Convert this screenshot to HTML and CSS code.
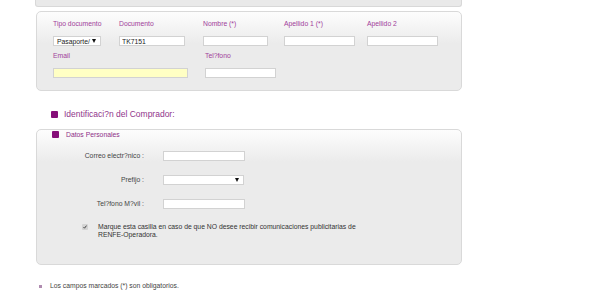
FILE: index.html
```html
<!DOCTYPE html>
<html lang="es">
<head>
    <meta charset="UTF-8">
    <title>Datos del viajero</title>
    <link rel="stylesheet" href="styles.css">
</head>
<body>
<div class="wrap">

    <div class="panel-end"></div>

    <div class="panel passenger">
        <div class="row">
            <div class="field f-tipo">
                <label>Tipo documento</label>
                <div class="select sel-tipo"><span>Pasaporte/</span><span class="arrow"></span></div>
            </div>
            <div class="field f-doc">
                <label>Documento</label>
                <input class="in-doc" value="TK7151">
            </div>
            <div class="field f-nom">
                <label>Nombre (*)</label>
                <input class="in-nom">
            </div>
            <div class="field f-ap1">
                <label>Apellido 1 (*)</label>
                <input class="in-ap">
            </div>
            <div class="field">
                <label>Apellido 2</label>
                <input class="in-ap">
            </div>
        </div>
        <div class="row row2">
            <div class="field f-email">
                <label>Email</label>
                <input class="in-email">
            </div>
            <div class="field">
                <label>Tel?fono</label>
                <input class="in-ap">
            </div>
        </div>
    </div>

    <h3 class="title"><span class="sq"></span>Identificaci?n del Comprador:</h3>

    <div class="panel buyer">
        <div class="legend"><span class="sq"></span>Datos Personales</div>
        <div class="form">
            <label>Correo electr?nico :</label>
            <input class="in-buyer">
            <label>Prefijo :</label>
            <div class="select sel-pref"><span></span><span class="arrow"></span></div>
            <label>Tel?fono M?vil :</label>
            <input class="in-buyer">
        </div>
        <div class="optout">
            <span class="check"><svg width="4" height="4" viewBox="0 0 4 4"><path d="M0.5 2.2 L1.5 3.2 L3.5 0.6" fill="none" stroke="#333" stroke-width="0.9"/></svg></span>
            <p>Marque esta casilla en caso de que NO desee recibir comunicaciones publicitarias de RENFE-Operadora.</p>
        </div>
    </div>

    <p class="note"><span class="dot"></span>Los campos marcados (*) son obligatorios.</p>

</div>
</body>
</html>
```

FILE: styles.css
```css
body {
    margin: 0;
    font-family: "Liberation Sans", Arial, sans-serif;
    font-size: 6.8px;
    color: #3a3a3a;
    background: #fff;
}
.wrap {
    margin-left: 36px;
    width: 426px;
}
.panel-end {
    height: 6px;
    background: #e9e9e9;
    border: 1px solid #d8d8d8;
    border-top: none;
    border-radius: 0 0 3px 3px;
    margin-left: -1px;
}
.panel {
    margin-top: 4px;
    border: 1px solid #d9d9d9;
    border-radius: 5px;
    background: linear-gradient(to bottom, #fdfdfd 0, #ebebeb 32px, #ebebeb 100%);
    box-sizing: border-box;
}
label {
    line-height: 8px;
    display: block;
}
input, .select {
    box-sizing: border-box;
    height: 10px;
    border: 1px solid #d2d2d2;
    background: #fff;
    font-family: inherit;
    font-size: 6.8px;
    color: #222;
    padding: 0 2px;
    margin: 0;
    outline: none;
}

/* datos del viajero */
.passenger {
    padding: 8px 0 12px 16px;
}
.passenger label {
    color: #a1409a;
}
.row {
    display: flex;
}
.row2 {
    margin-top: 6px;
}
.field {
    display: flex;
    flex-direction: column;
    gap: 8px;
}
.f-tipo { width: 66px; }
.f-doc { width: 84px; }
.f-nom { width: 81px; }
.f-ap1 { width: 83px; }
.f-email { width: 152px; }
.in-doc { width: 66px; }
.in-nom { width: 65px; }
.in-ap { width: 71px; }
.in-email {
    width: 135px;
    background: #ffffc4;
}
.select {
    display: flex;
    align-items: center;
    justify-content: space-between;
    padding: 0 4px 0 3px;
}
.sel-tipo { width: 48px; }
.arrow {
    width: 0;
    height: 0;
    border-left: 2px solid transparent;
    border-right: 2px solid transparent;
    border-top: 4px solid #111;
}

/* comprador */
.title {
    margin: 17px 0 9px;
    padding-left: 15px;
    display: flex;
    align-items: center;
    gap: 6px;
    font-size: 8.5px;
    font-weight: normal;
    line-height: 12px;
    color: #90358b;
}
.sq {
    width: 7px;
    height: 7px;
    border-radius: 1px;
    background: #860f79;
}
.buyer {
    padding: 1px 0 25px 0;
}
.legend {
    display: flex;
    align-items: center;
    gap: 7px;
    padding-left: 15px;
    line-height: 7px;
    color: #8e2f88;
}
.form {
    margin-top: 13px;
    display: grid;
    grid-template-columns: 107px 82px;
    column-gap: 19px;
    row-gap: 14px;
    align-items: center;
}
.form label {
    text-align: right;
    color: #444;
}
.in-buyer { width: 82px; }
.sel-pref {
    width: 81px;
    padding-right: 4px;
}
.optout {
    margin-top: 14px;
    padding-left: 45px;
    display: flex;
    gap: 10px;
}
.check {
    width: 6px;
    height: 6px;
    margin-top: 1px;
    border-radius: 1px;
    background: #d4d4d4;
    display: flex;
    align-items: center;
    justify-content: center;
}
.optout p {
    margin: 0;
    width: 262px;
    line-height: 8px;
    color: #333;
}

/* nota */
.note {
    margin: 17px 0 0;
    padding-left: 3px;
    display: flex;
    align-items: center;
    gap: 8px;
    line-height: 8px;
    color: #444;
}
.dot {
    width: 3px;
    height: 3px;
    background: #b08cb0;
}
```
